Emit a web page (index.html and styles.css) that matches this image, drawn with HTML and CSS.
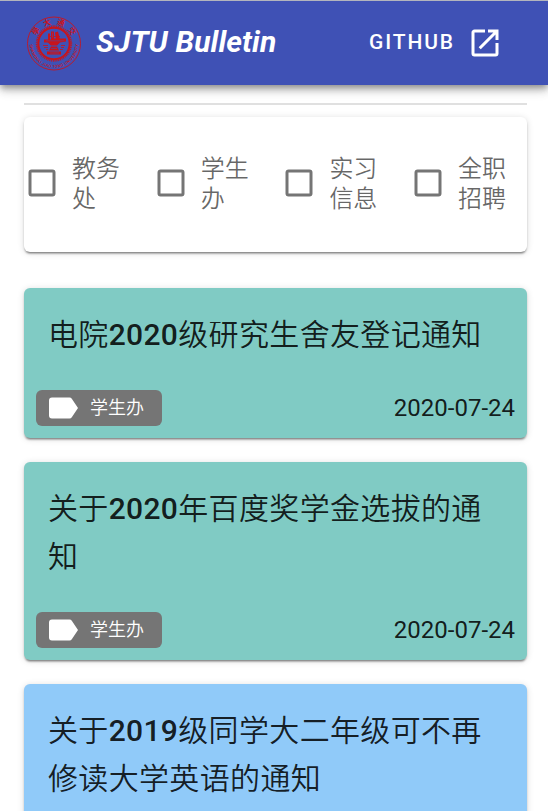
FILE: index.html
```html
<!DOCTYPE html>
<html lang="zh-CN">
<head>
<meta charset="utf-8">
<meta name="viewport" content="width=device-width">
<title>SJTU Bulletin</title>
<link rel="stylesheet" href="styles.css">
</head>
<body>
<header class="bar">
  <svg class="seal" viewBox="-30 -30.5 60 60" fill="none" stroke="#c8141c">
    <defs>
      <path id="lower" d="M-24.300 0A24.300 24.300 0 0 0 24.300 0"/>
      <path id="upper" d="M-17.800 -7.500A19.300 19.300 0 0 1 17.800 -7.500"/>
    </defs>
    <circle r="26.5" stroke-width=".9"/>
    <circle r="17.3" stroke-width="1.8" stroke-dasharray="1 .81"/>
    <circle r="15.7" stroke-width="2"/>
    <g fill="#c8141c" stroke="none">
      <text class="seal-en"><textPath href="#lower" startOffset="1" textLength="74">SHANGHAI JIAO TONG UNIVERSITY</textPath></text>
      <text class="seal-zh"><textPath href="#upper" startOffset="0" textLength="45">學大通交</textPath></text>
      <path d="M-6-10h2v7h-2zM-3-12h3v9h-3zM1-11l3-1 2 8H2zM-10-4H-2v-1H12v3l-6 1-3 3H-3L-6-1h-4zM-3 3h6l2 4H-5zM-7 8H7v3H-7z"/>
    </g>
    <path stroke-width=".8" d="M-11 2h5M-10 4h4M7 2h4M7 4h3M-8 6h2M6 6h3M-6-7H6"/>
    <path stroke="#3f51b5" stroke-width=".5" d="M-8-2.7H10M-4 9.5H5M-1.5-11v5M-3 5h6"/>
  </svg>
  <h1 class="brand">SJTU Bulletin</h1>
  <a class="github"><span class="github-label">GITHUB</span>
    <svg class="open" viewBox="0 0 24 24"><path fill="currentColor" d="M14 3v2h3.59l-9.83 9.83 1.41 1.41L19 6.41V10h2V3m-2 16H5V5h7V3H5c-1.11 0-2 .9-2 2v14a2 2 0 0 0 2 2h14a2 2 0 0 0 2-2v-7h-2z"/></svg>
  </a>
</header>
<main class="page">
  <hr class="rule">
  <section class="filters">
    <label class="filter"><svg class="box" viewBox="0 0 24 24"><path d="M19 3H5c-1.11 0-2 .89-2 2v14a2 2 0 0 0 2 2h14a2 2 0 0 0 2-2V5a2 2 0 0 0-2-2m0 2v14H5V5z"/></svg><span class="filter-label">教务<br>处</span></label>
    <label class="filter"><svg class="box" viewBox="0 0 24 24"><path d="M19 3H5c-1.11 0-2 .89-2 2v14a2 2 0 0 0 2 2h14a2 2 0 0 0 2-2V5a2 2 0 0 0-2-2m0 2v14H5V5z"/></svg><span class="filter-label">学生<br>办</span></label>
    <label class="filter"><svg class="box" viewBox="0 0 24 24"><path d="M19 3H5c-1.11 0-2 .89-2 2v14a2 2 0 0 0 2 2h14a2 2 0 0 0 2-2V5a2 2 0 0 0-2-2m0 2v14H5V5z"/></svg><span class="filter-label">实习<br>信息</span></label>
    <label class="filter"><svg class="box" viewBox="0 0 24 24"><path d="M19 3H5c-1.11 0-2 .89-2 2v14a2 2 0 0 0 2 2h14a2 2 0 0 0 2-2V5a2 2 0 0 0-2-2m0 2v14H5V5z"/></svg><span class="filter-label">全职<br>招聘</span></label>
  </section>
  <article class="card teal">
    <h2 class="title">电院<span class="year">2020</span>级研究生舍友登记通知</h2>
    <footer class="meta">
      <span class="chip"><svg class="tag" viewBox="0 0 29 22"><path fill="#fff" d="M3 .5h17.500c1 0 1.700.4 2.300 1.200L29 11l-6.200 9.300c-.6.8-1.300 1.200-2.300 1.200H3a3 3 0 0 1-3-3v-15a3 3 0 0 1 3-3z"/></svg><span class="chip-label">学生办</span></span>
      <time>2020-07-24</time>
    </footer>
  </article>
  <article class="card teal">
    <h2 class="title">关于<span class="year">2020</span>年百度奖学金选拔的通知</h2>
    <footer class="meta">
      <span class="chip"><svg class="tag" viewBox="0 0 29 22"><path fill="#fff" d="M3 .5h17.500c1 0 1.700.4 2.300 1.200L29 11l-6.200 9.300c-.6.8-1.300 1.200-2.300 1.200H3a3 3 0 0 1-3-3v-15a3 3 0 0 1 3-3z"/></svg><span class="chip-label">学生办</span></span>
      <time>2020-07-24</time>
    </footer>
  </article>
  <article class="card blue">
    <h2 class="title">关于<span class="year">2019</span>级同学大二年级可不再修读大学英语的通知</h2>
  </article>
</main>
</body>
</html>
```
FILE: styles.css
```css
* {
  box-sizing: border-box;
}

body {
  margin: 0;
  height: 811px;
  overflow: hidden;
  background: #fff;
  font-family: Roboto, "Noto Sans CJK SC", sans-serif;
  color: rgba(0, 0, 0, .87);
}

.bar {
  position: relative;
  display: flex;
  align-items: center;
  height: 85px;
  padding: 0 45px 0 24px;
  border-top: 1px solid #b3b5bd;
  background: #3f51b5;
  color: #fff;
  box-shadow: 0 3px 6px -1px rgba(0, 0, 0, .3), 0 6px 8px rgba(0, 0, 0, .16), 0 2px 15px rgba(0, 0, 0, .12);
}

.seal {
  width: 60px;
  height: 60px;
}

.seal-en {
  font: 500 4px Roboto, sans-serif;
}

.seal-zh {
  font: 700 7.5px "Noto Sans CJK TC", sans-serif;
}

.brand {
  margin: 0 auto 0 12px;
  padding-bottom: 2px;
  font-size: 30px;
  line-height: 36px;
  font-weight: 700;
  font-style: italic;
  letter-spacing: .13px;
}

.github {
  display: flex;
  align-items: center;
  gap: 12px;
  font-size: 21px;
  font-weight: 500;
  letter-spacing: 1.875px;
}

.github-label {
  padding-bottom: 2px;
}

.open {
  width: 36px;
  height: 36px;
}

.page {
  padding: 18px 21px 0 24px;
}

.rule {
  height: 2px;
  margin: 0 0 12px;
  border: 0;
  background: #e0e0e0;
}

.filters,
.card {
  border-radius: 6px;
  box-shadow: 0 3px 2px -2px rgba(0, 0, 0, .35), 0 2px 2px rgba(0, 0, 0, .18), 0 1px 7px rgba(0, 0, 0, .14);
}

.filters {
  display: grid;
  grid-template-columns: repeat(4, 128.7px);
  height: 135px;
  margin-bottom: 36px;
  padding-top: 36px;
  overflow: hidden;
}

.filter {
  display: flex;
  align-items: center;
  gap: 12px;
  height: 60px;
  color: rgba(0, 0, 0, .6);
  font-size: 24px;
  line-height: 30px;
}

.filter-label {
  padding-top: 2px;
  font-weight: 350;
}

.box {
  width: 36px;
  height: 36px;
  fill: #757575;
}

.card {
  margin-bottom: 24px;
}

.teal {
  background: #80cbc4;
}

.blue {
  background: #90caf9;
}

.title {
  margin: 0;
  padding: 23px 24px 19px;
  font-size: 30px;
  line-height: 48px;
  font-weight: 350;
  letter-spacing: .34px;
}

.year {
  font-weight: 500;
}

.meta {
  display: flex;
  align-items: center;
  justify-content: space-between;
  height: 60px;
  padding: 0 12px;
  font-size: 24px;
}

.chip {
  display: flex;
  align-items: center;
  gap: 12px;
  width: 126px;
  height: 36px;
  padding-left: 13px;
  border-radius: 6px;
  background: #757575;
  color: #fff;
  font-size: 18px;
}

.chip-label {
  padding-bottom: 5px;
  font-weight: 350;
}

.tag {
  width: 29px;
  height: 22px;
}
```
